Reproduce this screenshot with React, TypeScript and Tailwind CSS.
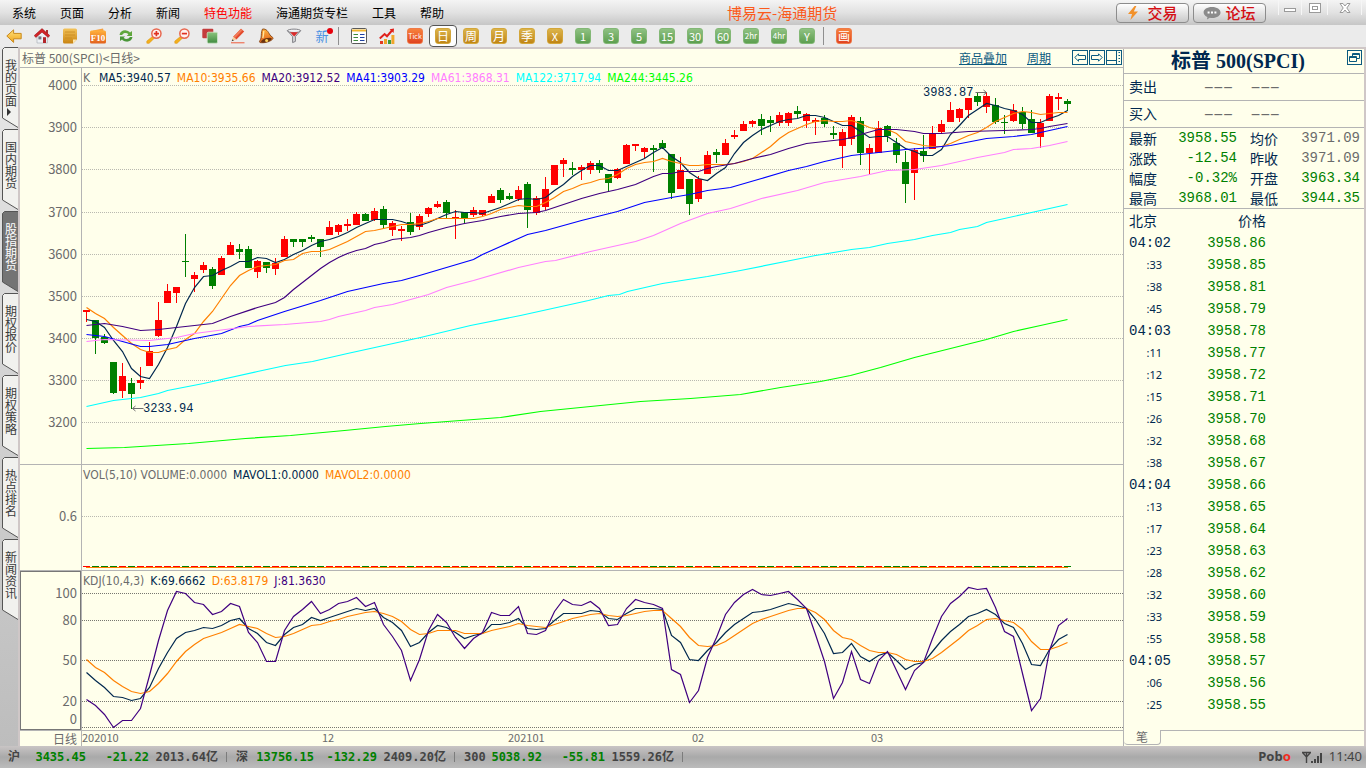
import type { ReactNode } from 'react';

type Point = [number, number];
// high, low, body top, body bottom, 1 = rising
type Candle = [number, number, number, number, number];

interface TickRow {
    time: string;
    price: string;
}

const LEFT = 82;
const K_TOP = 68;
const KDJ_TOP = 571;
const STEP = 9;

const candles: Candle[] = [
    [310, 322, 310, 312, 1], [320, 354, 320, 338, 0], [334, 344, 337, 343, 0], [362, 394, 362, 393, 0], [363, 398, 376, 391, 1],
    [378, 409, 383, 394, 0], [367, 389, 380, 383, 1], [342, 366, 351, 366, 1], [302, 337, 320, 336, 1], [284, 303, 291, 303, 1],
    [287, 303, 287, 293, 1], [234, 277, 261, 262, 0], [272, 292, 275, 279, 1], [262, 273, 265, 270, 1], [267, 289, 269, 286, 0],
    [256, 275, 258, 275, 1], [242, 255, 245, 255, 1], [244, 259, 249, 252, 0], [246, 268, 249, 268, 0], [260, 278, 261, 272, 1],
    [262, 273, 262, 268, 0], [258, 275, 263, 269, 1], [236, 257, 239, 257, 1], [239, 247, 239, 242, 0], [239, 247, 239, 242, 0],
    [235, 242, 237, 239, 0], [239, 257, 239, 247, 0], [221, 235, 227, 235, 1], [224, 235, 225, 232, 1], [219, 231, 224, 226, 1],
    [212, 225, 214, 225, 1], [213, 221, 214, 221, 0], [208, 221, 211, 220, 1], [206, 229, 209, 225, 0], [221, 236, 223, 230, 1],
    [226, 241, 229, 231, 1], [213, 235, 222, 232, 0], [214, 230, 216, 227, 1], [207, 217, 208, 214, 1], [201, 208, 204, 207, 1],
    [200, 218, 202, 213, 0], [210, 239, 217, 218, 1], [212, 223, 212, 218, 0], [207, 217, 210, 215, 1], [210, 216, 210, 215, 1],
    [194, 203, 196, 203, 1], [188, 203, 190, 200, 0], [193, 200, 196, 199, 0], [186, 201, 190, 199, 1], [182, 228, 184, 210, 0],
    [196, 215, 198, 213, 1], [177, 210, 189, 207, 1], [165, 185, 165, 185, 1], [158, 177, 160, 164, 1], [162, 175, 168, 170, 0],
    [165, 180, 167, 170, 1], [161, 174, 163, 170, 1], [160, 173, 163, 170, 0], [174, 192, 174, 183, 0], [168, 179, 169, 178, 1],
    [144, 164, 145, 164, 1], [144, 151, 144, 146, 1], [147, 158, 148, 152, 1], [145, 172, 148, 150, 0], [140, 149, 143, 148, 0],
    [154, 199, 154, 193, 0], [157, 189, 170, 189, 1], [179, 215, 179, 204, 0], [176, 202, 179, 199, 1], [151, 174, 155, 174, 1],
    [149, 163, 152, 155, 0], [139, 155, 143, 155, 1], [130, 139, 135, 137, 1], [121, 131, 124, 131, 1], [120, 127, 121, 124, 1],
    [114, 135, 119, 126, 0], [116, 132, 120, 123, 0], [112, 126, 115, 123, 1], [112, 126, 113, 123, 1], [106, 118, 111, 114, 0],
    [113, 128, 114, 121, 1], [118, 135, 120, 122, 1], [115, 127, 118, 124, 0], [126, 139, 133, 135, 0], [129, 168, 132, 146, 1],
    [115, 145, 117, 139, 1], [117, 165, 121, 153, 0], [144, 174, 148, 153, 1], [121, 153, 128, 153, 1], [125, 142, 126, 136, 0],
    [138, 163, 143, 155, 0], [151, 203, 162, 184, 0], [148, 200, 150, 173, 1], [135, 162, 151, 156, 0], [126, 149, 134, 149, 1],
    [120, 133, 124, 132, 1], [102, 122, 110, 122, 1], [108, 122, 109, 118, 1], [98, 118, 98, 110, 1], [93, 106, 96, 102, 0],
    [92, 113, 96, 107, 1], [98, 124, 105, 122, 0], [115, 134, 122, 123, 0], [104, 122, 110, 121, 1], [107, 129, 112, 124, 0],
    [110, 133, 119, 133, 0], [119, 148, 123, 137, 1], [94, 121, 96, 121, 1], [93, 110, 97, 99, 1], [99, 111, 101, 104, 0],
];

const ma5 = [
    319, 321, 327, 340, 351, 368, 376, 378, 364, 347, 326, 303, 287, 276, 275, 270, 266, 261, 261, 257,
    258, 262, 259, 254, 250, 245, 241, 239, 236, 232, 227, 223, 219, 219, 219, 221, 224, 225, 222, 218,
    214, 211, 212, 212, 213, 210, 207, 203, 199, 198, 199, 197, 190, 184, 176, 170, 165, 165, 170, 170,
    166, 162, 158, 152, 147, 156, 162, 172, 178, 180, 173, 167, 153, 142, 135, 129, 125, 121, 119, 118,
    115, 115, 117, 121, 125, 125, 131, 137, 136, 136, 142, 148, 151, 155, 155, 149, 134, 125, 115, 109,
    103, 105, 108, 110, 114, 122, 122, 118, 115, 110,
];

const ma10 = [
    307, 313, 318, 327, 335, 343, 349, 352, 352, 349, 347, 339, 333, 321, 311, 298, 285, 275, 270, 266,
    265, 264, 260, 259, 253, 251, 251, 249, 245, 241, 236, 231, 230, 228, 226, 224, 224, 223, 221, 218,
    218, 218, 218, 218, 216, 213, 209, 207, 205, 206, 206, 202, 197, 191, 188, 184, 182, 179, 178, 174,
    168, 164, 162, 161, 158, 161, 163, 165, 165, 164, 164, 164, 163, 161, 158, 152, 146, 138, 132, 128,
    124, 121, 120, 121, 121, 120, 123, 127, 129, 129, 133, 141, 143, 145, 146, 146, 143, 139, 135, 132,
    127, 121, 117, 113, 111, 112, 114, 113, 112, 112,
];

const ma20: Point[] = [
    [86, 325], [104, 323], [122, 326], [140, 330], [158, 329], [176, 327], [212, 323], [230, 316], [257, 307], [275, 302],
    [284, 297], [293, 289], [302, 282], [311, 275], [320, 268], [329, 262], [338, 257], [347, 253], [356, 250], [365, 248],
    [374, 244], [383, 242], [392, 239], [410, 237], [419, 235], [428, 232], [446, 227], [464, 223], [482, 220], [500, 216],
    [518, 213], [536, 212], [545, 210], [563, 204], [581, 198], [599, 193], [617, 189], [635, 184], [653, 176], [662, 173],
    [671, 173], [680, 171], [698, 171], [707, 168], [716, 166], [734, 163], [752, 158], [770, 154], [788, 148], [806, 143],
    [824, 141], [842, 139], [851, 137], [860, 134], [878, 129], [896, 129], [914, 131], [923, 133], [941, 133], [968, 131],
    [1004, 130], [1031, 129], [1040, 128], [1049, 126], [1067, 123],
];

const ma41: Point[] = [
    [86, 334], [104, 336], [122, 341], [140, 346], [149, 346], [167, 344], [194, 338], [221, 333], [239, 326], [248, 324],
    [257, 320], [284, 311], [320, 300], [347, 291], [383, 283], [401, 280], [419, 275], [446, 267], [473, 259], [482, 254],
    [500, 246], [518, 238], [527, 234], [545, 230], [581, 220], [617, 211], [644, 202], [671, 197], [689, 194], [707, 190],
    [730, 187], [761, 178], [788, 170], [806, 166], [824, 161], [851, 155], [869, 153], [905, 149], [932, 147], [950, 145],
    [986, 138], [1013, 136], [1031, 134], [1049, 130], [1067, 126],
];

const ma61: Point[] = [
    [86, 341], [104, 339], [149, 340], [176, 337], [194, 333], [248, 326], [284, 324], [320, 321], [329, 319], [338, 316],
    [365, 310], [374, 307], [392, 304], [410, 299], [428, 294], [446, 287], [473, 280], [518, 267], [545, 261], [555, 260],
    [590, 251], [635, 241], [653, 235], [680, 223], [707, 213], [730, 208], [761, 198], [797, 190], [824, 182], [842, 179],
    [860, 176], [887, 170], [914, 169], [941, 165], [977, 157], [1004, 152], [1013, 149], [1031, 148], [1049, 145], [1067, 141],
];

const ma122: Point[] = [
    [86, 406], [113, 400], [140, 397], [158, 393], [167, 390], [203, 383], [257, 371], [285, 365], [312, 361], [347, 353],
    [420, 337], [470, 325], [520, 315], [588, 300], [608, 295], [619, 294], [627, 291], [662, 283], [707, 276], [740, 270],
    [790, 260], [815, 255], [851, 249], [869, 247], [887, 243], [914, 239], [932, 235], [950, 232], [959, 229], [977, 226],
    [986, 222], [1022, 214], [1067, 204],
];

const ma244: Point[] = [
    [86, 448], [124, 447], [188, 443], [245, 438], [290, 435], [344, 430], [385, 426], [420, 423], [500, 417], [540, 411],
    [590, 406], [640, 401], [690, 398], [740, 394], [780, 387], [820, 381], [850, 375], [880, 367], [914, 357], [950, 348],
    [986, 339], [1013, 331], [1040, 325], [1067, 319],
];

const lineK = [
    672, 680, 687, 696, 697, 700, 698, 687, 668, 652, 638, 632, 630, 627, 628, 625, 620, 618, 628, 633,
    642, 645, 634, 627, 624, 617, 620, 617, 614, 611, 608, 610, 608, 617, 622, 630, 646, 642, 632, 625,
    627, 632, 638, 635, 633, 624, 624, 622, 618, 628, 629, 628, 620, 613, 613, 613, 610, 611, 618, 619,
    613, 608, 608, 608, 609, 635, 642, 659, 660, 650, 642, 632, 624, 618, 612, 611, 609, 606, 603, 605,
    608, 619, 633, 653, 652, 643, 656, 661, 655, 652, 660, 669, 664, 662, 651, 640, 631, 624, 616, 613,
    609, 614, 623, 627, 643, 664, 665, 649, 639, 634,
];

const lineD = [
    659, 667, 672, 680, 686, 691, 693, 691, 683, 673, 661, 651, 644, 638, 635, 632, 628, 624, 626, 628,
    633, 637, 636, 633, 629, 625, 624, 621, 619, 616, 614, 612, 611, 613, 616, 621, 629, 634, 633, 630,
    630, 630, 633, 633, 633, 630, 628, 626, 623, 625, 626, 627, 624, 621, 618, 616, 614, 613, 615, 616,
    615, 613, 611, 610, 610, 618, 626, 637, 645, 646, 645, 641, 635, 629, 623, 619, 616, 613, 610, 608,
    608, 612, 619, 630, 637, 639, 645, 650, 652, 652, 654, 659, 661, 661, 658, 652, 645, 638, 630, 625,
    619, 618, 620, 622, 629, 641, 649, 649, 646, 642,
];

const lineJ = [
    699, 705, 714, 727, 720, 720, 708, 675, 640, 610, 591, 593, 602, 604, 614, 611, 603, 606, 632, 642,
    661, 661, 630, 616, 609, 601, 613, 609, 603, 601, 597, 606, 602, 624, 636, 650, 680, 659, 630, 614,
    622, 637, 648, 638, 632, 612, 615, 615, 606, 633, 634, 630, 611, 599, 604, 605, 601, 608, 625, 624,
    608, 599, 602, 604, 608, 669, 674, 702, 690, 657, 637, 614, 602, 594, 589, 594, 595, 593, 591, 599,
    608, 634, 661, 698, 682, 651, 679, 683, 660, 651, 670, 689, 670, 662, 638, 616, 603, 596, 587, 589,
    588, 607, 631, 636, 673, 710, 698, 650, 625, 618,
];

const priceGrid = [
    { y: 17, label: '4000' },
    { y: 59, label: '3900' },
    { y: 101, label: '3800' },
    { y: 144, label: '3700' },
    { y: 186, label: '3600' },
    { y: 228, label: '3500' },
    { y: 270, label: '3400' },
    { y: 312, label: '3300' },
    { y: 354, label: '3200' },
];

const kdjGrid = [
    { y: 22, labelY: 22, label: '100' },
    { y: 49, labelY: 49, label: '80' },
    { y: 89, labelY: 89, label: '50' },
    { y: 130, labelY: 130, label: '20' },
    { y: 156, labelY: 148, label: '0' },
];

const menu = ['系统', '页面', '分析', '新闻', '特色功能', '海通期货专栏', '工具', '帮助'];
const sideTabs = ['我的页面', '国内期货', '股指期货', '期权报价', '期权策略', '热点排名', '新闻资讯'];

const quoteRows = [
    ['最新', '3958.55', '均价', '3971.09'],
    ['涨跌', '-12.54', '昨收', '3971.09'],
    ['幅度', '-0.32%', '开盘', '3963.34'],
    ['最高', '3968.01', '最低', '3944.35'],
];

const ticks: TickRow[] = [
    { time: '04:02', price: '3958.86' },
    { time: ':33', price: '3958.85' },
    { time: ':38', price: '3958.81' },
    { time: ':45', price: '3958.79' },
    { time: '04:03', price: '3958.78' },
    { time: ':11', price: '3958.77' },
    { time: ':12', price: '3958.72' },
    { time: ':15', price: '3958.71' },
    { time: ':26', price: '3958.70' },
    { time: ':32', price: '3958.68' },
    { time: ':38', price: '3958.67' },
    { time: '04:04', price: '3958.66' },
    { time: ':13', price: '3958.65' },
    { time: ':17', price: '3958.64' },
    { time: ':23', price: '3958.63' },
    { time: ':28', price: '3958.62' },
    { time: ':32', price: '3958.60' },
    { time: ':33', price: '3958.59' },
    { time: ':55', price: '3958.58' },
    { time: '04:05', price: '3958.57' },
    { time: ':06', price: '3958.56' },
    { time: ':25', price: '3958.55' },
];

const indexes = [
    { name: '沪', price: '3435.45', change: '-21.22', amount: '2013.64亿' },
    { name: '深', price: '13756.15', change: '-132.29', amount: '2409.20亿' },
    { name: '300', price: '5038.92', change: '-55.81', amount: '1559.26亿' },
];

const fromSeries = (ys: number[]) => ys.map((y, i) => `${86 + i * STEP},${y}`).join(' ');
const fromPoints = (pts: Point[]) => pts.map((p) => p.join(',')).join(' ');

function Line({ points, color }: { points: string; color: string }) {
    return <polyline points={points} fill="none" stroke={color} strokeWidth="1.2" />;
}

function GridLine({ y, color }: { y: number; color: string }) {
    return <line x1="0" x2="100%" y1={y + 0.5} y2={y + 0.5} stroke={color} strokeDasharray="1 1" shapeRendering="crispEdges" />;
}

function AxisLabel({ y, x, children }: { y: number; x: number; children: ReactNode }) {
    return (
        <text x={x} y={y + 5} textAnchor="end" fill="#6b6b6b" className="font-['Noto_Sans_CJK_SC',sans-serif] text-[13px]">
            {children}
        </text>
    );
}

/* ---------- toolbar icons ---------- */

function Icon({ children }: { children: ReactNode }) {
    return (
        <svg viewBox="0 0 16 16" className="size-4" aria-hidden="true">
            {children}
        </svg>
    );
}

function IconDefs() {
    return (
        <svg className="absolute size-0" aria-hidden="true">
            <defs>
                <linearGradient id="gold" x1="0" y1="0" x2="0" y2="1">
                    <stop offset="0" stopColor="#ffe27a" />
                    <stop offset="1" stopColor="#f0a41c" />
                </linearGradient>
                <linearGradient id="ochre" x1="0" y1="0" x2="0" y2="1">
                    <stop offset="0" stopColor="#f3c35a" />
                    <stop offset="1" stopColor="#c98412" />
                </linearGradient>
                <linearGradient id="orange" x1="0" y1="0" x2="0" y2="1">
                    <stop offset="0" stopColor="#ffb13c" />
                    <stop offset="1" stopColor="#e2601c" />
                </linearGradient>
                <linearGradient id="leaf" x1="0" y1="0" x2="0" y2="1">
                    <stop offset="0" stopColor="#8cc47e" />
                    <stop offset="1" stopColor="#3f8a3f" />
                </linearGradient>
            </defs>
        </svg>
    );
}

function BackIcon() {
    return (
        <Icon>
            <path d="M0.8 8 7.6 1.8V5.4H15.2V10.8H7.6V14.4Z" fill="url(#gold)" stroke="#c98a1e" strokeWidth="1" strokeLinejoin="round" />
        </Icon>
    );
}

function HomeIcon() {
    return (
        <Icon>
            <path d="M3 7.5V15H13.4V7.5L8 3Z" fill="#eef1f5" stroke="#a3a8b0" strokeWidth=".6" />
            <path d="M12 2H14V6L12 4.5Z" fill="#a33" />
            <path d="M8 .6 15.8 7.6 14.2 9.4 8 4.2 1.8 9.4 .2 7.6Z" fill="#d32428" stroke="#8f1216" strokeWidth=".5" />
            <path d="M4.4 8.4h3v3h-3z" fill="#6e7680" />
            <path d="M9 9.2h3V15H9z" fill="#b3262a" />
        </Icon>
    );
}

function NoteIcon() {
    return (
        <Icon>
            <path d="M2.5 .5H13.5Q15 .5 15 2V11.5L11 15.5H2.5Q1 15.5 1 14V2Q1 .5 2.5 .5Z" fill="url(#ochre)" />
            <path d="M15 11.5H11V15.5Z" fill="#fbe6b0" />
            <path d="M3 4H13M3 7H13M3 10H10" stroke="#c98a22" strokeWidth=".8" />
        </Icon>
    );
}

function F10Icon() {
    return (
        <Icon>
            <path d="M3 2.5 13 .5 14 4H2Z" fill="#f6a040" />
            <rect x="0" y="2.5" width="16" height="13" rx="1.5" fill="url(#orange)" />
            <text x="8" y="12.5" textAnchor="middle" fill="#fff" className="font-['Liberation_Serif',serif] text-[9px] font-bold">F10</text>
        </Icon>
    );
}

function RefreshIcon() {
    return (
        <Icon>
            <path d="M1.5 7C2 3.5 5 2 8 2.4 10 2.6 11.2 3.4 12 4.4L14 3V8H8.8L10.4 6.2C8.6 4.4 5.4 4.6 4.2 7Z" fill="#5fa63c" />
            <path d="M14.5 9C14 12.500 11 14 8 13.6 6 13.4 4.8 12.6 4 11.6L2 13V8.6H7.2L5.6 9.8C7.4 11.6 10.6 11.4 11.8 9Z" fill="#4a9638" />
        </Icon>
    );
}

function MagnifierIcon({ plus }: { plus?: boolean }) {
    return (
        <Icon>
            <path d="M6.4 8.6 8.2 10.4 3 15.4 .8 15.2 .8 13Z" fill="#f3b01d" stroke="#dc9510" strokeWidth=".5" />
            <circle cx="10.4" cy="5.6" r="4.6" fill="#fff2ef" stroke="#e8674f" strokeWidth="1.5" />
            <path d={plus ? 'M7.8 5.6H13M10.4 3V8.2' : 'M7.8 5.6H13'} stroke="#e03020" strokeWidth="1.7" />
        </Icon>
    );
}

function LayersIcon() {
    return (
        <Icon>
            <rect x=".3" y=".8" width="11" height="9.5" rx="1" fill="#c43c3c" />
            <rect x="5.2" y="4.2" width="10.3" height="11" rx="1.2" fill="url(#leaf)" stroke="#cfe8ca" strokeWidth=".8" />
        </Icon>
    );
}

function PencilIcon() {
    return (
        <Icon>
            <path d="M11 .8 14.2 3.6 6.4 11.6 3.2 8.800Z" fill="#e3492c" />
            <path d="M11 .8 12.6 2.2 4.8 10.200 3.2 8.800Z" fill="#f07a58" />
            <path d="M3.2 8.800 6.4 11.6 1.6 13.2Z" fill="#f5cf9b" />
            <path d="M2.600 11.2 1.6 13.2 3.8 12.500Z" fill="#333" />
            <path d="M1 14.8H14.5" stroke="#ef5a3a" strokeWidth="1" />
        </Icon>
    );
}

function BellIcon() {
    return (
        <Icon>
            <path d="M4.5 1C8.5 .6 10 3.5 12 7 13 8.6 15.4 9 15 10.6 13.6 13.2 7 15.4 2 14.6 .6 14 2.6 12 3 10 3.6 7 3 4 4.5 1Z" fill="url(#orange)" stroke="#7a3b0c" strokeWidth=".8" />
            <ellipse cx="8.4" cy="12.2" rx="5.6" ry="2" transform="rotate(-18 8.4 12.2)" fill="#6b3410" />
            <circle cx="8.6" cy="12.6" r="1.5" fill="#ffd35c" />
            <path d="M5.8 3C5.6 5.6 5.6 7.6 4.8 10" stroke="#ffe7a0" strokeWidth="1.3" fill="none" />
        </Icon>
    );
}

function FilterIcon() {
    return (
        <Icon>
            <path d="M1.4 2.6 6.6 8.6V14.6L9.4 13.4V8.6L14.6 2.6Z" fill="#d7d7da" stroke="#76767c" strokeWidth=".9" />
            <ellipse cx="8" cy="2.8" rx="6.6" ry="1.7" fill="#f1f1f3" stroke="#76767c" strokeWidth=".9" />
            <path d="M4 4.2H12L8.2 8.6Z" fill="#dc2a2a" />
        </Icon>
    );
}

function ListIcon() {
    return (
        <Icon>
            <rect x=".5" y=".5" width="15" height="15" rx="1" fill="#fff" stroke="#5a5a5a" />
            <path d="M1 2.5H15" stroke="#f1b62e" strokeWidth="2" />
            <path d="M2.5 6.5H7M2.5 9.5H7M2.5 12.5H7" stroke="#3e8a3c" strokeWidth="1.2" />
            <path d="M9 6.5H13.5M9 9.5H13.5M9 12.5H13.5" stroke="#1e3fa0" strokeWidth="1.2" />
        </Icon>
    );
}

function TrendIcon() {
    return (
        <Icon>
            <path d="M1 13H4V16H1Z" fill="#e23a24" />
            <path d="M5 11H8V16H5Z" fill="#f1a62a" />
            <path d="M9 12H12V16H9Z" fill="#3d9a3d" />
            <path d="M12.4 7H15.4V16H12.4Z" fill="#f1a62a" />
            <path d="M.8 10.5 5.6 6 8 8.2 13.4 2" fill="none" stroke="#e0211c" strokeWidth="2" />
            <path d="M10.6 1.2 15 .6 14.6 5Z" fill="#e0211c" />
        </Icon>
    );
}

function NewIcon() {
    return (
        <span className="relative text-[13px] leading-4 text-[#4a90e2]">
            新
            <span className="absolute top-0 -right-1 size-[6px] rounded-full bg-red-600" />
        </span>
    );
}

function Badge({ label, tone }: { label: string; tone: 'gold' | 'green' | 'red' }) {
    const bg = {
        gold: 'from-[#dcb54a] to-[#c08512] border-[#d3a63a]',
        green: 'from-[#8fc182] to-[#5d9f4f] border-[#83b876]',
        red: 'from-[#f7813c] to-[#e0421f] border-[#ee7a48]',
    }[tone];
    const size = label.length > 3 ? 'text-[7px]' : label.length > 2 ? 'text-[8px]' : /[A-Z0-9]/.test(label) ? 'text-[11px]' : 'text-[12px]';
    return (
        <span className={`flex size-4 items-center justify-center rounded-[3px] border bg-linear-to-b leading-none whitespace-nowrap text-white ${bg} ${size}`}>
            {label}
        </span>
    );
}

function ToolButton({ label, active, children }: { label: string; active?: boolean; children: ReactNode }) {
    return (
        <button
            aria-label={label}
            className={`flex h-[22px] w-7 shrink-0 items-center justify-center ${active ? 'rounded border border-[#555] bg-white' : ''}`}
        >
            {children}
        </button>
    );
}

function Separator() {
    return <span className="mt-[2px] mr-[6px] ml-[2px] h-[18px] w-px shrink-0 bg-[#8f8f8f]" />;
}

function TitleBar() {
    return (
        <header className="flex h-[25px] shrink-0 items-center bg-linear-to-b from-[#f4f4f4] via-[#e2e2e2] to-[#c6c6c6]">
            <nav className="flex gap-6 pl-3 text-xs">
                {menu.map((item) => (
                    <button key={item} className={`whitespace-nowrap ${item === '特色功能' ? 'text-[#ff0000]' : 'text-black'}`}>
                        {item}
                    </button>
                ))}
            </nav>
            <h1 className="flex-1 pl-1 text-center text-[15px] leading-5 whitespace-nowrap text-[#fb5a1c]">博易云-海通期货</h1>
            <div className="flex gap-1">
                <button className="flex h-5 w-[73px] items-center justify-center gap-2 rounded border border-[#8c8c8c] bg-linear-to-b from-white to-[#c9c9c9] text-[15px] leading-4 font-medium text-[#d40f14]">
                    <svg viewBox="0 0 12 16" className="h-4 w-3" aria-hidden="true">
                        <path d="M7.6 1 1 9H5L3.4 15 11 6.6H6.8L9.4 1Z" fill="#f2912a" />
                    </svg>
                    交易
                </button>
                <button className="flex h-5 w-[73px] items-center justify-center gap-1 rounded border border-[#8c8c8c] bg-linear-to-b from-white to-[#c9c9c9] text-[15px] leading-4 font-medium text-[#d40f14]">
                    <svg viewBox="0 0 18 14" className="h-[14px] w-[18px]" aria-hidden="true">
                        <path d="M9 1C14 1 17.5 3.4 17.5 6.5S14 12 9.4 12C8.4 12 7.6 12 6.8 11.7L4 13.6 4.4 11C2 10 .6 8.4 .6 6.5 .6 3.4 4 1 9 1Z" fill="#8b8b8b" />
                        <path d="M4.6 5.6h2v2h-2zM8 5.6h2v2H8zM11.4 5.6h2v2h-2z" fill="#fff" />
                    </svg>
                    论坛
                </button>
            </div>
            <div className="mr-1 ml-3 flex self-start">
                <button aria-label="最小化" className="flex h-[15px] w-6 items-end justify-center border-x border-[#f6f6f6] pb-[3px]">
                    <span className="h-1 w-3 border border-[#9a9a9a] bg-white" />
                </button>
                <button aria-label="最大化" className="flex h-[15px] w-[26px] items-center justify-center border-r border-[#f6f6f6]">
                    <span className="flex h-[10px] w-3 items-center justify-center border border-[#9a9a9a] bg-white">
                        <span className="h-1 w-[6px] border border-[#9a9a9a]" />
                    </span>
                </button>
                <button aria-label="关闭" className="flex h-[15px] w-[34px] items-center justify-center border-r border-[#f6f6f6]">
                    <svg viewBox="0 0 12 12" className="size-3" aria-hidden="true">
                        <path d="M1 1.5H4L6 4 8 1.5H11L7.8 6 11 10.5H8L6 8 4 10.5H1L4.2 6Z" fill="#fff" stroke="#9a9a9a" />
                    </svg>
                </button>
            </div>
        </header>
    );
}

function Toolbar() {
    return (
        <div className="flex h-6 shrink-0 items-start border-b-2 border-[#cfc7c7] bg-[#ebebeb]">
            <IconDefs />
            <ToolButton label="后退"><BackIcon /></ToolButton>
            <ToolButton label="首页"><HomeIcon /></ToolButton>
            <ToolButton label="资讯"><NoteIcon /></ToolButton>
            <ToolButton label="基本资料"><F10Icon /></ToolButton>
            <ToolButton label="刷新"><RefreshIcon /></ToolButton>
            <ToolButton label="放大"><MagnifierIcon plus /></ToolButton>
            <ToolButton label="缩小"><MagnifierIcon /></ToolButton>
            <ToolButton label="叠加"><LayersIcon /></ToolButton>
            <ToolButton label="画笔"><PencilIcon /></ToolButton>
            <ToolButton label="预警"><BellIcon /></ToolButton>
            <ToolButton label="筛选"><FilterIcon /></ToolButton>
            <ToolButton label="新"><NewIcon /></ToolButton>
            <Separator />
            <ToolButton label="报价"><ListIcon /></ToolButton>
            <ToolButton label="走势"><TrendIcon /></ToolButton>
            <ToolButton label="Tick"><Badge label="Tick" tone="red" /></ToolButton>
            <ToolButton label="日" active><Badge label="日" tone="gold" /></ToolButton>
            {['周', '月', '季', 'X'].map((p) => (
                <ToolButton key={p} label={p}><Badge label={p} tone="gold" /></ToolButton>
            ))}
            {['1', '3', '5', '15', '30', '60', '2hr', '4hr', 'Y'].map((p) => (
                <ToolButton key={p} label={p}><Badge label={p} tone="green" /></ToolButton>
            ))}
            <Separator />
            <ToolButton label="画"><Badge label="画" tone="red" /></ToolButton>
        </div>
    );
}

function SideTabs() {
    return (
        <aside className="-mt-[2px] flex w-5 shrink-0 flex-col border-r-2 border-[#cfc7c7] bg-linear-to-b from-[#e8e8e8] to-[#bdbdbd]">
            {sideTabs.map((tab, i) => {
                const active = tab === '股指期货';
                return (
                    <button key={tab} className="relative flex h-[82px] shrink-0 flex-col items-center">
                        <svg viewBox="0 0 18 82" className="absolute inset-0 h-full w-full" aria-hidden="true">
                            <path
                                d="M18 .5H4.5L2.5 2.5V71L18 80.5"
                                fill={active ? '#747474' : '#f1f1ee'}
                                stroke="#555"
                            />
                        </svg>
                        <span className={`relative mt-3 pl-[3px] text-xs leading-[14px] [writing-mode:vertical-rl] ${active ? 'text-white' : 'text-[#3a3a3a]'}`}>
                            {tab}
                        </span>
                        {i === 0 && (
                            <svg viewBox="0 0 4 8" className="relative mt-px h-2 w-1" aria-hidden="true">
                                <path d="M0 0 4 4 0 8Z" fill="#333" />
                            </svg>
                        )}
                    </button>
                );
            })}
        </aside>
    );
}

function ChartHeader() {
    const box = 'flex h-[15px] w-4 items-center justify-center border border-[#0b5a80] text-[#0b5a80]';
    return (
        <div className="flex h-[19px] shrink-0 items-center border-b border-[#b4b4b4] pl-[2px] text-xs">
            <h2 className="flex-1 text-[#6b6b6b]">标普 500(SPCI)&lt;日线&gt;</h2>
            <a href="#overlay" className="mr-5 text-[#0b5a80] underline">商品叠加</a>
            <a href="#period" className="mr-[21px] text-[#0b5a80] underline">周期</a>
            <div className="flex gap-px self-start pt-px pr-px">
                <button aria-label="左移" className={box}>
                    <svg viewBox="0 0 12 9" className="h-[9px] w-3" fill="none" stroke="currentColor" aria-hidden="true">
                        <path d="M.8 4.5 4.5 .8V2.5H11.5V6.5H4.5V8.2Z" />
                    </svg>
                </button>
                <button aria-label="右移" className={box}>
                    <svg viewBox="0 0 12 9" className="h-[9px] w-3" fill="none" stroke="currentColor" aria-hidden="true">
                        <path d="M11.2 4.5 7.5 .8V2.5H.5V6.5H7.5V8.2Z" />
                    </svg>
                </button>
                <button aria-label="布局" className={box}>
                    <svg viewBox="0 0 14 13" className="h-[13px] w-[14px]" fill="none" stroke="currentColor" aria-hidden="true">
                        <path d="M0 9.5H9.5M9.5 0V13M11.5 1.5H13M11.5 4.5H13M11.5 7.5H13M11.5 10.5H13" />
                    </svg>
                </button>
            </div>
        </div>
    );
}

const legend = "absolute top-[2px] left-px flex gap-[6px] font-['DejaVu_Sans_Condensed','DejaVu_Sans',sans-serif] text-xs leading-4 whitespace-nowrap";

function PricePanel() {
    return (
        <section className="flex min-h-0 flex-1 border-b border-[#b4b4b4]">
            <svg className="h-full w-[61px] shrink-0">
                {priceGrid.map((g) => (
                    <AxisLabel key={g.label} x={57} y={g.y}>{g.label}</AxisLabel>
                ))}
            </svg>
            <div className="relative min-w-0 flex-1 border-l border-[#b4b4b4]">
                <svg className="block h-full w-full">
                    {priceGrid.map((g) => (
                        <GridLine key={g.label} y={g.y} color="#b9b9b0" />
                    ))}
                    <g transform={`translate(${-LEFT} ${-K_TOP})`}>
                        <g shapeRendering="crispEdges">
                            {candles.map(([high, low, top, bottom, up], i) => {
                                const x = 86 + i * STEP;
                                const color = up ? '#ff0000' : '#008000';
                                return (
                                    <g key={i} fill={color}>
                                        <rect x={x} y={high} width="1" height={low - high} />
                                        <rect x={x - 3} y={top} width="7" height={bottom - top} />
                                    </g>
                                );
                            })}
                        </g>
                        <g transform="translate(.5 .5)">
                            <Line points={fromSeries(ma5)} color="#00284f" />
                            <Line points={fromSeries(ma10)} color="#ff8000" />
                            <Line points={fromPoints(ma20)} color="#400080" />
                            <Line points={fromPoints(ma41)} color="#0000ff" />
                            <Line points={fromPoints(ma61)} color="#ff80ff" />
                            <Line points={fromPoints(ma122)} color="#00ffff" />
                            <Line points={fromPoints(ma244)} color="#00ff00" />
                            <path d="M132 408H143M135 405.5 132 408 135 410.5" stroke="#707070" fill="none" />
                            <path d="M975 92H986M983 89.5 986 92 983 94.5" stroke="#707070" fill="none" />
                        </g>
                        <g fill="#00284f" className="font-['Liberation_Mono',monospace] text-xs">
                            <text x="143" y="412">3233.94</text>
                            <text x="923" y="96">3983.87</text>
                        </g>
                    </g>
                </svg>
                <p className={legend}>
                    <span className="w-[10px] text-[#6b6b6b]">K</span>
                    <span className="text-[#00284f]">MA5:3940.57</span>
                    <span className="text-[#ff8000]">MA10:3935.66</span>
                    <span className="text-[#400080]">MA20:3912.52</span>
                    <span className="text-[#0000ff]">MA41:3903.29</span>
                    <span className="text-[#ff80ff]">MA61:3868.31</span>
                    <span className="text-[#00ffff]">MA122:3717.94</span>
                    <span className="text-[#00ff00]">MA244:3445.26</span>
                </p>
            </div>
        </section>
    );
}

function VolumePanel() {
    return (
        <section className="flex h-[106px] shrink-0 border-b border-[#b4b4b4]">
            <svg className="h-full w-[61px] shrink-0">
                <AxisLabel x={57} y={51}>0.6</AxisLabel>
            </svg>
            <div className="relative min-w-0 flex-1 border-l border-[#b4b4b4]">
                <svg className="block h-full w-full" shapeRendering="crispEdges">
                    <GridLine y={51} color="#b9b9b0" />
                    <rect x="4" y="102" width="982" height="1" fill="#ff8000" />
                    {candles.map((c, i) => (
                        <rect key={i} x={1 + i * STEP} y="101" width="7" height="1" fill={c[4] ? '#ff0000' : '#008000'} />
                    ))}
                </svg>
                <p className={legend}>
                    <span className="text-[#6b6b6b]">VOL(5,10) VOLUME:0.0000</span>
                    <span className="text-[#00284f]">MAVOL1:0.0000</span>
                    <span className="text-[#ff8000]">MAVOL2:0.0000</span>
                </p>
            </div>
        </section>
    );
}

function KdjPanel() {
    return (
        <section className="flex h-[160px] shrink-0 border-b border-[#b4b4b4]">
            <svg className="h-full w-[61px] shrink-0 border border-[#777]">
                {kdjGrid.map((g) => (
                    <AxisLabel key={g.label} x={56} y={g.labelY - 1}>{g.label}</AxisLabel>
                ))}
            </svg>
            <div className="relative min-w-0 flex-1 border-l border-[#b4b4b4]">
                <svg className="block h-full w-full">
                    {kdjGrid.map((g) => (
                        <GridLine key={g.label} y={g.y} color="#777770" />
                    ))}
                    <g transform={`translate(${-LEFT} ${-KDJ_TOP}) translate(.5 .5)`}>
                        <Line points={fromSeries(lineK)} color="#00284f" />
                        <Line points={fromSeries(lineD)} color="#ff8000" />
                        <Line points={fromSeries(lineJ)} color="#400080" />
                    </g>
                </svg>
                <p className={legend}>
                    <span className="text-[#6b6b6b]">KDJ(10,4,3)</span>
                    <span className="text-[#00284f]">K:69.6662</span>
                    <span className="text-[#ff8000]">D:63.8179</span>
                    <span className="text-[#400080]">J:81.3630</span>
                </p>
            </div>
        </section>
    );
}

function DateAxis() {
    const labels = [
        { x: 0, text: '202010' },
        { x: 240, text: '12' },
        { x: 426, text: '202101' },
        { x: 610, text: '02' },
        { x: 789, text: '03' },
    ];
    return (
        <div className="flex h-[15px] shrink-0 text-xs leading-[15px] text-[#6b6b6b]">
            <span className="w-[61px] shrink-0 pr-1 text-right">日线</span>
            <svg className="h-full min-w-0 flex-1 border-l border-[#b4b4b4]">
                {labels.map((l) => (
                    <text key={l.text} x={l.x} y="11" fill="#6b6b6b" className="font-['Noto_Sans_CJK_SC',sans-serif] text-[11px]">
                        {l.text}
                    </text>
                ))}
            </svg>
        </div>
    );
}

function QuotePanel() {
    return (
        <aside className="flex w-[242px] shrink-0 flex-col border-r-2 border-[#cfc7c7] text-sm text-[#00284f]">
            <div className="relative flex h-[25px] shrink-0 items-center justify-center border-b border-[#b4b4b4] pr-3">
                <h2 className="font-['Liberation_Serif','Noto_Sans_CJK_SC',serif] text-xl leading-6 font-bold">标普 500(SPCI)</h2>
                <button aria-label="弹出窗口" className="absolute top-px right-[2px] flex size-[15px] items-center justify-center border border-[#0b5a80] text-[#0b5a80]">
                    <svg viewBox="0 0 11 11" className="size-[11px]" fill="none" stroke="currentColor" aria-hidden="true">
                        <path d="M3.5 4V1.5H10.5V6.5H7.5M3.5 2.5H10.5" />
                        <path d="M.5 4.5H7.5V9.5H.5ZM.5 5.5H7.5" />
                    </svg>
                </button>
            </div>
            {['卖出', '买入'].map((side) => (
                <div key={side} className="flex h-[27px] shrink-0 items-start border-b border-[#b4b4b4] pt-[2px] pl-[5px]">
                    <span className="w-[75px]">{side}</span>
                    <span className="flex gap-[18px] pt-px font-['Liberation_Mono',monospace] text-base text-[#6b6b6b]">
                        <span>−−−</span>
                        <span>−−−</span>
                    </span>
                </div>
            ))}
            <table className="w-full table-fixed border-b border-[#b4b4b4]">
                <tbody>
                    {quoteRows.map(([l1, v1, l2, v2], i) => (
                        <tr key={l1} className="h-5 leading-5">
                            <th className="w-10 pl-[5px] text-left font-normal whitespace-nowrap">{l1}</th>
                            <td className="w-[73px] text-right font-['Liberation_Mono',monospace] text-[#008000]">{v1}</td>
                            <th className="w-[54px] pl-[13px] text-left font-normal">{l2}</th>
                            <td className={`pr-1 text-right font-['Liberation_Mono',monospace] ${i < 2 ? 'text-[#6b6b6b]' : 'text-[#008000]'}`}>{v2}</td>
                        </tr>
                    ))}
                </tbody>
            </table>
            <div className="min-h-0 flex-1 overflow-hidden">
                <table className="w-full table-fixed">
                    <thead>
                        <tr className="h-[23px] align-top leading-[22px]">
                            <th className="w-12 pl-[5px] text-left font-normal">北京</th>
                            <th className="w-[94px] text-right font-normal">价格</th>
                            <th />
                        </tr>
                    </thead>
                    <tbody>
                        {ticks.map((t) => (
                            <tr key={t.price} className="h-[22px] leading-[22px]">
                                {t.time.length > 3 ? (
                                    <td className="pl-[5px] font-['Liberation_Mono',monospace]">{t.time}</td>
                                ) : (
                                    <td className="pr-[10px] text-right font-['Noto_Sans',sans-serif] text-[11px]">{t.time}</td>
                                )}
                                <td className="text-right font-['Liberation_Mono',monospace] text-[#008000]">{t.price}</td>
                                <td />
                            </tr>
                        ))}
                    </tbody>
                </table>
            </div>
            <div className="flex h-4 shrink-0">
                <button className="h-[15px] w-[37px] rounded-b border-r border-b border-[#b4b4b4] text-xs leading-[14px] text-[#6b6b6b]">笔</button>
                <span className="flex-1 border-t border-[#b4b4b4]" />
            </div>
        </aside>
    );
}

function StatusBar() {
    return (
        <footer className="flex h-[22px] shrink-0 items-center bg-linear-to-b from-[#c9c5c5] via-[#a9a9a9] to-[#bcbcbc] px-2 font-['DejaVu_Sans_Mono','Noto_Sans_CJK_SC',monospace] text-xs font-bold text-[#444]">
            {indexes.map((ix) => (
                <div key={ix.name} className="flex shrink-0 items-center">
                    <span className="flex w-[78px] justify-between">
                        <span>{ix.name}</span>
                        <span className="text-[#008000]">{ix.price}</span>
                    </span>
                    <span className="w-[63px] text-right text-[#008000]">{ix.change}</span>
                    <span className="w-[69px] text-right">{ix.amount}</span>
                    <span className="mr-[9px] ml-2 h-[10px] w-px bg-[#7c7c7c]" />
                </div>
            ))}
            <span className="ml-auto font-['Noto_Sans',sans-serif] text-[13px]">
                Pob<span className="text-[#f02a20]">o</span>
            </span>
            <svg viewBox="0 0 22 13" className="mr-[6px] ml-[10px] h-[13px] w-[22px]" aria-hidden="true">
                <path d="M1 1.5H10M1.5 1.5 5.5 6 9.5 1.5M5.5 1V12" stroke="#444" strokeWidth="1.4" fill="none" />
                <path d="M10 10H12V12H10ZM13 8H15V12H13ZM16 5H18V12H16ZM19 2H21V12H19Z" fill="#444" />
            </svg>
            <time className="-mr-1 font-['Noto_Sans',sans-serif] text-[13px] font-normal">11:40</time>
        </footer>
    );
}

export default function App() {
    return (
        <div className="flex h-screen flex-col overflow-hidden bg-[#ffffeb] font-['Noto_Sans_CJK_SC',sans-serif]">
            <TitleBar />
            <Toolbar />
            <div className="flex min-h-0 flex-1">
                <SideTabs />
                <main className="flex min-w-0 flex-1 flex-col border-r border-[#b4b4b4]">
                    <ChartHeader />
                    <PricePanel />
                    <VolumePanel />
                    <KdjPanel />
                    <DateAxis />
                </main>
                <QuotePanel />
            </div>
            <StatusBar />
        </div>
    );
}
